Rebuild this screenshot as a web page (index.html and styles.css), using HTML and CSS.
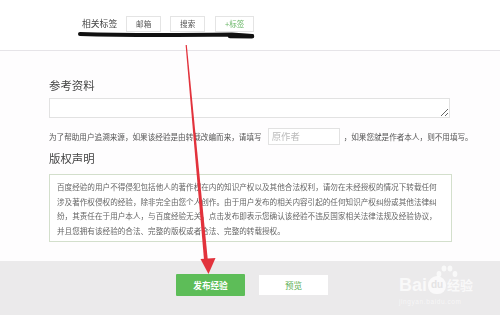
FILE: index.html
```html
<!DOCTYPE html>
<html lang="zh-CN">
<head>
<meta charset="utf-8">
<link rel="stylesheet" href="styles.css">
</head>
<body>
<div class="page">
  <header class="tags-bar">
    <span class="tags-label">相关标签</span>
    <span class="tag">邮箱</span>
    <span class="tag">搜索</span>
    <span class="tag tag-add">+标签</span>
  </header>
  <main class="main">
    <h2 class="section-title title-ref">参考资料</h2>
    <textarea class="ref-input"></textarea>
    <div class="source-row">
      <span>为了帮助用户追溯来源，如果该经验是由转载改编而来，请填写</span>
      <span class="author-input">原作者</span>
      <span>，如果您就是作者本人，则不用填写。</span>
    </div>
    <h2 class="section-title title-copy">版权声明</h2>
    <div class="copyright-box">
      百度经验的用户不得侵犯包括他人的著作权在内的知识产权以及其他合法权利，请勿在未经授权的情况下转载任何<br>涉及著作权侵权的经验，除非完全由您个人创作。由于用户发布的相关内容引起的任何知识产权纠纷或其他法律纠<br>纷，其责任在于用户本人，与百度经验无关。点击发布即表示您确认该经验不违反国家相关法律法规及经验协议，<br>并且您拥有该经验的合法、完整的版权或者合法、完整的转载授权。
    </div>
  </main>
  <footer class="footer">
    <span class="btn btn-publish">发布经验</span>
    <span class="btn btn-preview">预览</span>
    <div class="watermark">
      <div class="wm-logo">
        <span class="wm-bai">Bai</span>
        <span class="wm-du">du</span>
        <svg class="wm-paw" width="26" height="16" viewBox="0 0 26 16">
          <ellipse cx="5" cy="10" rx="2.4" ry="3" fill="#fff" opacity="0.7"/>
          <ellipse cx="10" cy="4.5" rx="2.4" ry="3" fill="#fff" opacity="0.7"/>
          <ellipse cx="16" cy="4.5" rx="2.4" ry="3" fill="#fff" opacity="0.7"/>
          <ellipse cx="21" cy="10" rx="2.4" ry="3" fill="#fff" opacity="0.7"/>
        </svg>
        <span class="wm-jy">经验</span>
      </div>
      <div class="wm-url">jingyan.baidu.com</div>
    </div>
  </footer>
  <svg class="annotations" width="500" height="315" viewBox="0 0 500 315">
    <path d="M80 34 C 130 35.5, 190 35, 232 34.5 L 252 36" fill="none" stroke="#111" stroke-width="4" stroke-linecap="round"/>
    <path d="M230 36 L 252 36.2" fill="none" stroke="#111" stroke-width="4.5" stroke-linecap="round"/>
    <polygon points="185.6,45 186.8,45 208,262 204.2,262" fill="#e2323c"/>
    <polygon points="200.5,259 215.5,258 208.5,274" fill="#e2323c"/>
  </svg>
</div>
</body>
</html>
```
FILE: styles.css
```css
* { box-sizing: border-box; }
html, body { margin: 0; padding: 0; }
body {
  width: 500px;
  height: 315px;
  overflow: hidden;
  background: #fefdfe;
  font-family: "Noto Sans CJK SC", "Noto Sans", sans-serif;
  color: #555;
}
.page {
  position: relative;
  width: 500px;
  height: 315px;
}
.tags-bar {
  height: 51px;
  border-bottom: 1px solid #e6e4e8;
  background: #fff;
  display: flex;
  align-items: flex-start;
  padding: 16px 0 0 82px;
}
.tags-label {
  font-size: 8.8px;
  line-height: 16px;
  color: #444;
  margin-right: 9px;
}
.tag {
  height: 16px;
  width: 35px;
  border: 1px solid #e4e4e4;
  font-size: 7.6px;
  line-height: 14px;
  text-align: center;
  color: #555;
  margin-right: 9px;
  background: #fff;
}
.tag-add {
  width: 39px;
  color: #6cb86a;
  margin-left: 1px;
}
.main {
  padding: 0 0 0 49px;
}
.section-title {
  margin: 0;
  font-size: 11.4px;
  line-height: 14px;
  font-weight: normal;
  color: #444;
}
.title-ref { margin-top: 27px; }
.title-copy { margin-top: 6px; }
.ref-input {
  display: block;
  margin: 6px 0 0 0;
  width: 401px;
  height: 20px;
  border: 1px solid #e2e2e2;
  background: #fff;
  padding: 0;
  font: inherit;
}
.source-row {
  margin-top: 10px;
  display: flex;
  align-items: center;
  height: 17px;
  font-size: 7.6px;
  color: #555;
  white-space: nowrap;
}
.author-input {
  width: 72px;
  height: 17px;
  border: 1px solid #e2e2e2;
  background: #fff;
  margin: 0 4px 0 6px;
  padding-left: 3px;
  font-size: 9.4px;
  line-height: 15px;
  color: #bbb;
}
.copyright-box {
  margin-top: 9px;
  width: 403px;
  height: 68px;
  border: 1px solid #d3dfcc;
  background: #fff;
  padding: 5px 0 0 7px;
  font-size: 7.6px;
  line-height: 14.5px;
  color: #666;
  white-space: nowrap;
}
.footer {
  margin-top: 19px;
  height: 54px;
  background: #ebeaeb;
  display: flex;
  align-items: center;
  justify-content: center;
  gap: 14px;
  padding: 0 0 6px 4px;
  position: relative;
}
.btn {
  width: 69px;
  text-align: center;
  font-size: 8.6px;
}
.btn-publish {
  height: 22px;
  line-height: 22px;
  background: #5dbd58;
  color: #fff;
  font-weight: bold;
  border-radius: 1px;
}
.btn-preview {
  height: 20px;
  line-height: 20px;
  background: #fff;
  color: #5aae52;
}
.watermark {
  position: absolute;
  left: 399px;
  top: 6px;
  width: 90px;
}
.wm-logo {
  position: relative;
  height: 28px;
  display: flex;
  align-items: flex-end;
}
.wm-bai {
  font-family: "Liberation Sans", sans-serif;
  font-weight: bold;
  font-size: 18px;
  line-height: 20px;
  color: rgba(255,255,255,0.72);
}
.wm-du {
  display: inline-block;
  margin-left: 1px;
  width: 18px;
  height: 18px;
  border-radius: 9px 9px 8px 8px;
  background: rgba(255,255,255,0.72);
  color: #e4e3e4;
  font-family: "Liberation Sans", sans-serif;
  font-weight: bold;
  font-size: 10px;
  line-height: 18px;
  text-align: center;
  margin-bottom: 1px;
}
.wm-paw {
  position: absolute;
  left: 35px;
  top: -3px;
}
.wm-jy {
  font-size: 13px;
  line-height: 20px;
  margin-left: 1px;
  color: rgba(255,255,255,0.72);
  font-weight: bold;
}
.wm-url {
  font-family: "Liberation Sans", sans-serif;
  font-size: 6.5px;
  letter-spacing: 0.6px;
  color: rgba(255,255,255,0.6);
  margin-top: 3px;
}
.annotations {
  position: absolute;
  left: 0;
  top: 0;
  pointer-events: none;
}
```
